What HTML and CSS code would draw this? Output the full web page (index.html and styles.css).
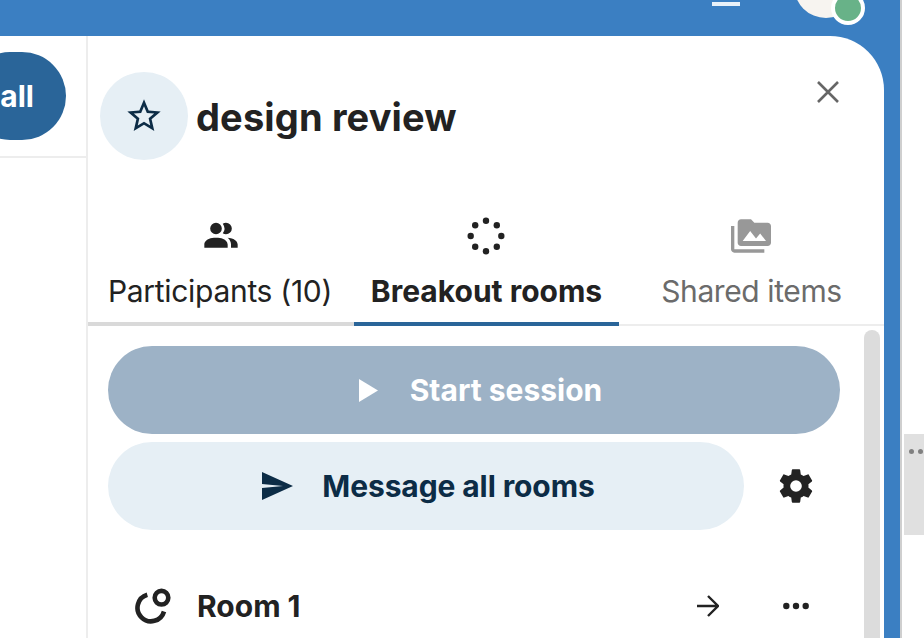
FILE: index.html
```html
<!DOCTYPE html>
<html lang="en">
<head>
  <meta charset="UTF-8" />
  <title>design review</title>
  <link rel="stylesheet" href="styles.css">
</head>
<body>

<div class="app">
  <header class="topbar">
    <span class="menu-line"></span>
    <div class="avatar"><span class="status"></span></div>
  </header>

  <div class="content">
    <div class="call">
      <div class="call-head">
        <button class="call-btn">all</button>
      </div>
    </div>

    <aside class="sidebar">
      <div class="side-head">
        <div class="room-badge">
          <svg class="star" viewBox="0 0 24 24"><path d="M12 15.39l-3.76 2.27.99-4.28-3.32-2.88 4.38-.37L12 6.09l1.71 4.04 4.38.37-3.32 2.88.99 4.28M22 9.24l-7.19-.61L12 2 9.19 8.63 2 9.24l5.45 4.73L5.82 21 12 17.27 18.18 21l-1.64-7.03L22 9.24z"/></svg>
        </div>
        <h1>design review</h1>
        <svg class="close" viewBox="0 0 24 24"><path d="M2 2L22 22M22 2L2 22"/></svg>
      </div>

      <nav class="tabs">
        <div class="tab">
          <svg class="tab-icon" viewBox="0 0 24 24"><path d="M16 17V19H2V17S2 13 9 13 16 17 16 17M12.5 7.5A3.5 3.5 0 1 0 9 11A3.5 3.5 0 0 0 12.5 7.5M15.94 13A5.32 5.32 0 0 1 18 17V19H22V17S22 13.37 15.94 13M15 4A3.39 3.39 0 0 0 13.07 4.59A5 5 0 0 1 13.07 10.41A3.39 3.39 0 0 0 15 11A3.5 3.5 0 0 0 15 4Z"/></svg>
          <span class="tab-label">Participants (10)</span>
        </div>
        <div class="tab active">
          <svg class="tab-icon" viewBox="0 0 40 40">
            <circle cx="20" cy="4.7" r="3.2"/><circle cx="30.8" cy="9.2" r="3.2"/><circle cx="35.3" cy="20" r="3.2"/><circle cx="30.8" cy="30.8" r="3.2"/>
            <circle cx="20" cy="35.3" r="3.2"/><circle cx="9.2" cy="30.8" r="3.2"/><circle cx="4.7" cy="20" r="3.2"/><circle cx="9.2" cy="9.2" r="3.2"/>
          </svg>
          <span>Breakout rooms</span>
        </div>
        <div class="tab muted">
          <svg class="tab-icon" viewBox="0 0 24 24"><path d="M2 6H0v5h.01L0 20c0 1.1.9 2 2 2h18v-2H2V6zm20-2h-8l-2-2H6c-1.1 0-1.99.9-1.99 2L4 16c0 1.1.9 2 2 2h16c1.1 0 2-.9 2-2V6c0-1.1-.9-2-2-2zM7 15l4.5-6 3.5 4.51 2.5-3.01L21 15H7z"/></svg>
          <span>Shared items</span>
        </div>
      </nav>

      <div class="panel">
        <div class="rooms">
          <button class="btn btn-start">
            <svg class="play" viewBox="0 0 20 24"><path d="M0 0L20 12L0 24Z"/></svg>
            Start session
          </button>

          <div class="btn-row">
            <button class="btn btn-message">
              <svg class="send" viewBox="0 0 36 36"><path d="M3 4L34 18L3 32V20L24 18L3 16Z"/></svg>
              Message all rooms
            </button>
            <svg class="gear" viewBox="0 0 24 24"><path d="M12,15.5A3.5,3.5 0 0,1 8.5,12A3.5,3.5 0 0,1 12,8.5A3.5,3.5 0 0,1 15.5,12A3.5,3.5 0 0,1 12,15.5M19.43,12.97C19.47,12.65 19.5,12.33 19.5,12C19.5,11.67 19.47,11.34 19.43,11L21.54,9.37C21.73,9.22 21.78,8.95 21.66,8.73L19.66,5.27C19.54,5.05 19.27,4.96 19.05,5.05L16.56,6.05C16.04,5.66 15.5,5.32 14.87,5.07L14.5,2.42C14.46,2.18 14.25,2 14,2H10C9.75,2 9.54,2.18 9.5,2.42L9.13,5.07C8.5,5.32 7.96,5.66 7.44,6.05L4.95,5.05C4.73,4.96 4.46,5.05 4.34,5.27L2.34,8.73C2.21,8.95 2.27,9.22 2.46,9.37L4.57,11C4.53,11.34 4.5,11.67 4.5,12C4.5,12.33 4.53,12.65 4.57,12.97L2.46,14.63C2.27,14.78 2.21,15.05 2.34,15.27L4.34,18.73C4.46,18.95 4.73,19.03 4.95,18.95L7.44,17.94C7.96,18.34 8.5,18.68 9.13,18.93L9.5,21.58C9.54,21.82 9.75,22 10,22H14C14.25,22 14.46,21.82 14.5,21.58L14.87,18.93C15.5,18.67 16.04,18.34 16.56,17.94L19.05,18.95C19.27,19.03 19.54,18.95 19.66,18.73L21.66,15.27C21.78,15.05 21.73,14.78 21.54,14.63L19.43,12.97Z"/></svg>
          </div>

          <div class="room-row">
            <svg class="room-icon" viewBox="0 0 36 36">
              <path d="M12.3 6.8A13.5 13.5 0 1 0 29 23.5"/>
              <circle cx="26.5" cy="9.7" r="6.8"/>
            </svg>
            <span class="room-name">Room 1</span>
            <svg class="arrow" viewBox="0 0 22 22"><path d="M0 11H21M11 1L21 11L11 21"/></svg>
            <svg class="dots" viewBox="0 0 26 8"><circle cx="3.3" cy="4" r="3.2"/><circle cx="13" cy="4" r="3.2"/><circle cx="22.7" cy="4" r="3.2"/></svg>
          </div>
        </div>
        <div class="scroll-thumb"></div>
      </div>
    </aside>
  </div>
</div>

<div class="outside">
  <div class="handle"><span></span><span></span></div>
</div>

</body>
</html>
```

FILE: styles.css
```css
* {
  box-sizing: border-box;
}

html, body {
  height: 100%;
}

body {
  margin: 0;
  display: flex;
  overflow: hidden;
  background: #fff;
  font-family: Inter, "Liberation Sans", sans-serif;
  color: #222;
}

button {
  font: inherit;
  border: none;
}

.app {
  width: 902px;
  height: 638px;
  background: #3b7fc2;
  border-right: 2px solid #cfcfcf;
  display: flex;
  flex-direction: column;
}

.topbar {
  height: 36px;
  flex-shrink: 0;
  display: flex;
  position: relative;
  overflow: hidden;
}

.menu-line {
  width: 28px;
  height: 4px;
  margin: 2px 0 0 712px;
  background: #e8f1f9;
}

.avatar {
  width: 64px;
  height: 64px;
  margin: -46px 0 0 54px;
  border-radius: 50%;
  background: #f7f4f0;
  position: relative;
}

.status {
  position: absolute;
  left: 37px;
  top: 37px;
  width: 34px;
  height: 34px;
  border-radius: 50%;
  background: #68b288;
  border: 4px solid #fff;
}

.content {
  flex: 1;
  display: flex;
  min-height: 0;
  padding-right: 16px;
}

.call {
  width: 88px;
  background: #fff;
  border-right: 2px solid #ededed;
  overflow: hidden;
  flex-shrink: 0;
}

.call-head {
  height: 122px;
  padding-top: 16px;
  border-bottom: 2px solid #ededed;
}

.call-btn {
  display: block;
  width: 100px;
  height: 88px;
  margin-left: -34px;
  padding: 0 32px 0 0;
  text-align: right;
  border-radius: 44px;
  background: #2a6599;
  color: #fff;
  font-size: 30px;
  font-weight: 700;
}

.sidebar {
  flex: 1;
  min-width: 0;
  background: #fff;
  border-top-right-radius: 54px;
  display: flex;
  flex-direction: column;
}

.side-head {
  display: flex;
  align-items: center;
  height: 88px;
  margin-top: 36px;
  padding-left: 12px;
}

.room-badge {
  width: 88px;
  height: 88px;
  border-radius: 50%;
  background: #e6eff5;
  display: flex;
  align-items: center;
  justify-content: center;
  flex-shrink: 0;
}

.star {
  width: 40px;
  height: 40px;
  fill: #0c2c46;
}

h1 {
  margin: 2px 0 0 8px;
  font-size: 38px;
  font-weight: 700;
  line-height: 48px;
  letter-spacing: 0.15px;
}

.close {
  width: 24px;
  height: 24px;
  margin: -48px 44px 0 auto;
  flex-shrink: 0;
  fill: none;
  stroke: #666;
  stroke-width: 2.6;
}

.tabs {
  display: grid;
  grid-template-columns: 266px 265px 265px;
  margin-top: 52px;
  border-bottom: 2px solid #ededed;
}

.tab {
  display: flex;
  flex-direction: column;
  align-items: center;
  height: 114px;
  padding-top: 4px;
  margin-bottom: -2px;
  border-bottom: 4px solid #d9d9d9;
  font-size: 30px;
  letter-spacing: -0.3px;
  line-height: 40px;
  fill: #222;
}

.tab-icon {
  width: 40px;
  height: 40px;
  margin-bottom: 15px;
}

.tab-label {
  margin-left: -2px;
}

.tab.active {
  border-bottom-color: #2a6599;
  font-weight: 700;
  letter-spacing: 0;
}

.tab.muted {
  border-bottom-color: transparent;
  color: #6b6b6b;
  fill: #989898;
  letter-spacing: -0.4px;
}

.tab.active .tab-icon,
.tab.muted .tab-icon {
  margin-left: -2px;
}

.panel {
  flex: 1;
  min-height: 0;
  display: flex;
  padding-left: 20px;
}

.rooms {
  width: 732px;
  padding-top: 20px;
}

.btn {
  display: flex;
  align-items: center;
  justify-content: center;
  height: 88px;
  border-radius: 44px;
  font-size: 30px;
  font-weight: 700;
}

.btn-start {
  width: 100%;
  padding-left: 19px;
  background: #9db2c6;
  color: #fff;
  fill: #fff;
}

.play {
  width: 19px;
  height: 23px;
  margin-right: 32px;
}

.btn-row {
  display: flex;
  align-items: center;
  margin-top: 8px;
}

.btn-message {
  width: 636px;
  padding-left: 8px;
  background: #e6eff5;
  color: #0c2c46;
  fill: #0c2c46;
  letter-spacing: -0.1px;
}

.send {
  width: 36px;
  height: 36px;
  margin-right: 27px;
}

.gear {
  width: 40px;
  height: 40px;
  margin-left: 32px;
  fill: #222;
}

.room-row {
  display: flex;
  align-items: center;
  height: 72px;
  margin-top: 40px;
  padding-left: 27px;
  fill: #222;
}

.room-icon {
  width: 36px;
  height: 36px;
  fill: none;
  stroke: #222;
  stroke-width: 4.6;
}

.room-name {
  margin-left: 26px;
  font-size: 30px;
  font-weight: 700;
}

.arrow {
  width: 22px;
  height: 22px;
  margin-left: auto;
  fill: none;
  stroke: #222;
  stroke-width: 2.4;
}

.dots {
  width: 26px;
  height: 8px;
  margin: 0 31px 0 64px;
}

.scroll-thumb {
  width: 16px;
  margin: 4px 0 0 24px;
  border-radius: 8px 8px 0 0;
  background: #dcdcdc;
}

.outside {
  flex: 1;
  padding: 434px 0 0 2px;
}

.handle {
  height: 101px;
  display: flex;
  gap: 4px;
  padding: 15px 0 0 5px;
  background: #e0e0e0;
  overflow: hidden;
}

.handle span {
  width: 5px;
  height: 5px;
  border-radius: 50%;
  background: #808080;
  flex-shrink: 0;
}
```
